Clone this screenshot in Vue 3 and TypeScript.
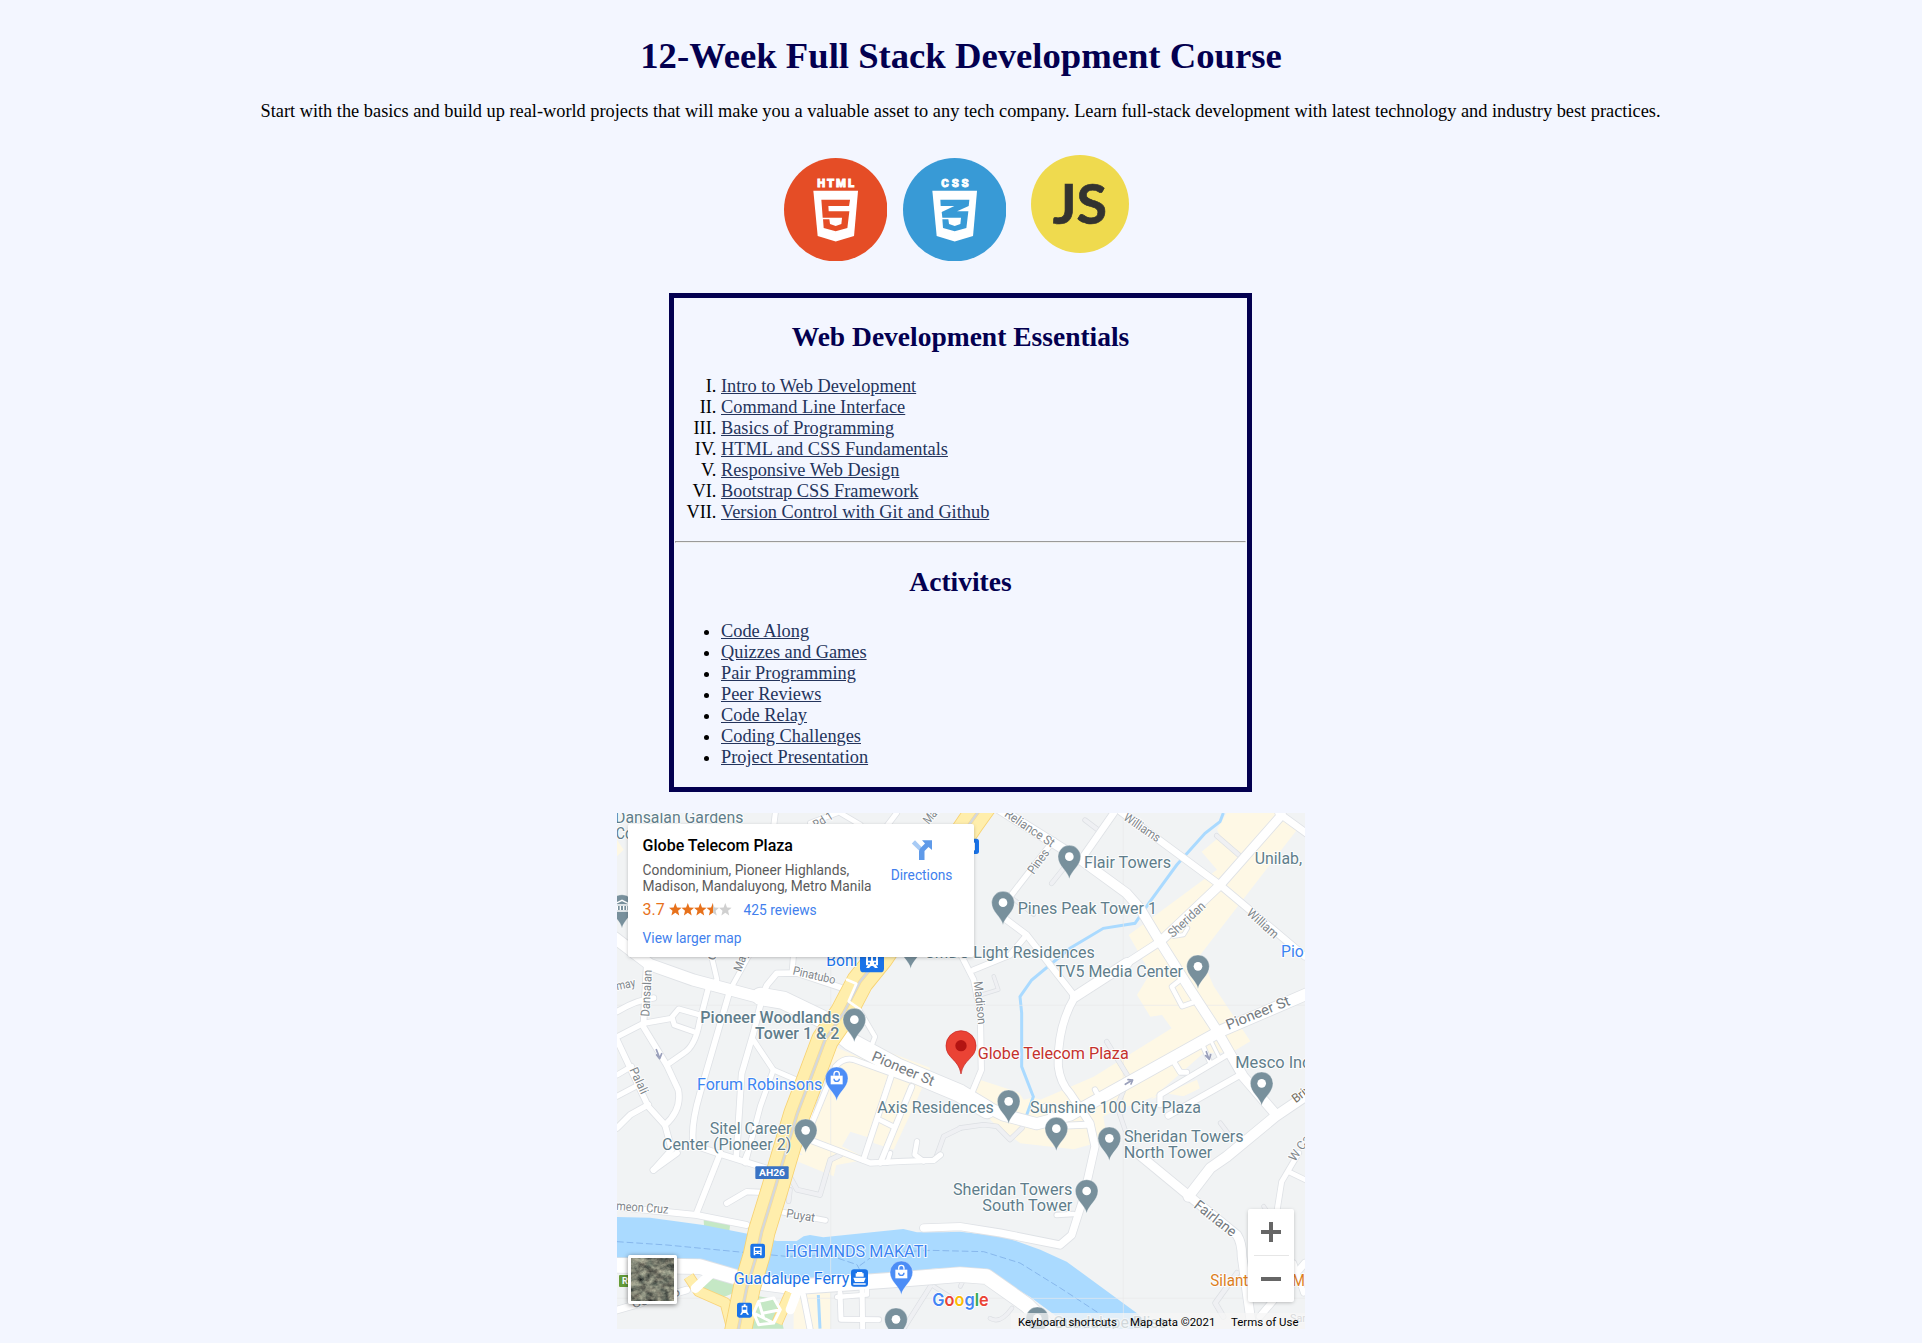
<script setup lang="ts">
interface Road { d: string; w: number }
interface Label { t: string; x: number; y: number; len: number; r?: number; c?: string; s?: number; b?: number }
interface Pin { x: number; y: number; c?: string; kind?: string }

const essentials: string[] = [
  'Intro to Web Development', 'Command Line Interface', 'Basics of Programming',
  'HTML and CSS Fundamentals', 'Responsive Web Design', 'Bootstrap CSS Framework',
  'Version Control with Git and Github',
]
const activities: string[] = [
  'Code Along', 'Quizzes and Games', 'Pair Programming', 'Peer Reviews',
  'Code Relay', 'Coding Challenges', 'Project Presentation',
]

// The map canvas uses three units per CSS pixel.
const lanes: Road[] = [
  { d: 'M1404 21L1445 52', w: 12 }, { d: 'M1345 160L1304 211', w: 12 }, { d: 'M1799 68L1870 130', w: 12 },
  { d: 'M1095 545L1144 530L1130 490', w: 9 }, { d: 'M1469 686L1539 800', w: 12 },
  { d: 'M1529 811L1500 880L1524 950', w: 11 }, { d: 'M1029 945L1100 935L1140 940L1179 980L1215 945', w: 12 },
  { d: 'M1810 930L1840 970', w: 11 }, { d: 'M1860 1380L1795 1470L1819 1511', w: 14 },
  { d: 'M1119 1516Q1150 1535 1185 1485', w: 10 }, { d: 'M1185 255L1250 305', w: 9 },
  { d: 'M515 1085L540 1130L609 1146L640 1040L670 1026', w: 13 }, { d: 'M519 1130L515 1165', w: 12 },
  { d: 'M940 1420L860 1547', w: 12 }, { d: 'M950 1420L1029 1470', w: 10 }, { d: 'M1029 946L980 970L955 1040', w: 12 },
  { d: 'M1030 1420L1050 1380', w: 10 }, { d: 'M2020 1300L1940 1180', w: 10 },
]
const roads: Road[] = [
  { d: 'M0 596Q60 560 110 555', w: 16 }, { d: 'M0 672L79 631L164 616', w: 16 },
  { d: 'M249 606L185 588L165 612L172 636L229 656', w: 15 }, { d: 'M278 510L248 625Q235 700 199 721L149 756', w: 16 },
  { d: 'M90 440L79 641L149 756L184 831Q195 890 144 936', w: 17 }, { d: 'M0 681L94 881L144 936L164 1010L110 1071', w: 17 },
  { d: 'M0 786L44 760', w: 15 }, { d: 'M0 850L64 816', w: 15 }, { d: 'M0 945L40 905L94 875', w: 17 },
  { d: 'M339 531L249 841Q220 940 229 996L300 1020L460 1070', w: 17 }, { d: 'M434 561L409 661L374 781L358 1030', w: 17 },
  { d: 'M409 681L469 771L539 801', w: 15 }, { d: 'M469 771L430 880L385 1050', w: 15 },
  { d: 'M434 551L450 516L479 481L540 480L690 530', w: 17 }, { d: 'M530 420L525 480', w: 15 },
  { d: 'M284 432L300 500L285 515', w: 14 }, { d: 'M400 420L345 520', w: 14 },
  { d: 'M475 0L470 40', w: 15 }, { d: 'M660 0L580 30', w: 14 }, { d: 'M839 0L809 40', w: 15 }, { d: 'M670 0L730 35', w: 14 },
  { d: 'M700 545L774 671L759 710', w: 13 }, { d: 'M585 931L655 761Q680 732 710 740L879 801', w: 15 },
  { d: 'M614 791L570 931', w: 15 }, { d: 'M822 791L739 1041', w: 16 }, { d: 'M884 821L790 1050', w: 16 },
  { d: 'M789 921L829 941', w: 14 }, { d: 'M579 981L760 1050L860 1045L950 1042L970 1026', w: 16 }, { d: 'M900 985L893 1025L920 1045', w: 14 },
  { d: 'M1490 0L1395 136', w: 20 }, { d: 'M1310 82L1180 250', w: 16 },
  { d: 'M1169 321L1229 366L1369 545', w: 18 }, { d: 'M1229 366L1179 426L1069 471', w: 16 },
  { d: 'M1029 420L1070 500L1090 600L1093 771L1064 841', w: 16 },
  { d: 'M1150 -10L1399 146L1529 241L1569 286L1629 386L1720 530L1799 651L1879 791L1974 901', w: 28 },
  { d: 'M1629 386L1374 551Q1320 640 1324 761Q1330 810 1359 841L1419 931L1434 1000L1399 1156L1364 1266L1329 1296L1150 1260L1029 1241L920 1245', w: 22 },
  { d: 'M1374 551L1530 450', w: 30 },
  { d: 'M1629 386L1809 216L1994 6', w: 26 }, { d: 'M1985 0L2070 62', w: 20 },
  { d: 'M1510 -5L1809 216L2064 430', w: 20 }, { d: 'M1670 370L1700 365L1712 345', w: 10 },
  { d: 'M1729 568L1695 580L1664 521L1690 501', w: 13 }, { d: 'M1664 736L1690 778L1709 778', w: 15 },
  { d: 'M1829 726L1629 845L1629 875', w: 16 }, { d: 'M1869 786L1654 908', w: 18 }, { d: 'M1754 690L1780 750', w: 13 },
  { d: 'M1780 680L1805 730', w: 9 },
  { d: 'M2064 850L1974 911L1829 1031L1780 1065L1714 1151', w: 30 },
  { d: 'M1560 1020L1719 1151L1860 1266Q1875 1290 1875 1330L1905 1547', w: 26 },
  { d: 'M2045 1020L1994 1106L1979 1200', w: 15 }, { d: 'M2014 1076L2064 1100', w: 14 }, { d: 'M2064 1350L1929 1510', w: 20 },
  { d: 'M2060 1440L2030 1350', w: 16 },
  { d: 'M1319 1206L1369 1203', w: 14 }, { d: 'M1434 830L1450 860', w: 14 }, { d: 'M1285 880L1320 930', w: 15 }, { d: 'M1410 935L1300 940', w: 18 },
  { d: 'M310 1020L239 1200', w: 17 }, { d: 'M180 1020L109 1071', w: 17 }, { d: 'M329 1171L389 1136L434 1138', w: 16 },
  { d: 'M390 1020L380 1045', w: 13 }, { d: 'M810 1050L820 1020', w: 12 },
  { d: 'M0 1182L239 1206L389 1236', w: 18 }, { d: 'M489 1196L625 1222', w: 15 },
  { d: 'M0 1491L209 1431', w: 20 }, { d: 'M559 1446L579 1547', w: 16 }, { d: 'M669 1440L672 1519L785 1520', w: 15 },
  { d: 'M735 1420L737 1547', w: 15 }, { d: 'M660 1452L750 1445L750 1430', w: 13 },
  { d: 'M0 1357L249 1361L400 1405L529 1422L829 1401L1029 1385L1109 1391L1229 1476L1300 1547', w: 44 },
  { d: 'M-10 372L99 455L229 501L419 551L499 560L619 620L699 685L839 761L1029 841L1159 906L1259 932L1359 906L1529 811L1809 655L2074 541', w: 34 },
  { d: 'M430 550L499 562L619 620L699 685L839 761L1029 841L1110 890', w: 52 },
]

const highway = 'M1110 -40L1060 30L789 432L729 506L679 601L624 681L579 801L541 901L499 1041L474 1126L434 1256L419 1326L389 1426L362 1560'

const G = '#607d8b'
const labels: Label[] = [
  { t: 'Dansalan Gardens', x: -6, y: 31, len: 385 }, { t: 'Co', x: -4, y: 79, len: 52 },
  { t: 'Rd 1', x: 598, y: 48, len: 62, r: -32, c: '#80868b', s: 36 }, { t: 'Mad', x: 935, y: 36, len: 60, r: -50, c: '#80868b', s: 38 },
  { t: 'Reliance St', x: 1160, y: 8, len: 172, r: 34, c: '#80868b', s: 38 }, { t: 'Pines', x: 1250, y: 186, len: 82, r: -54, c: '#80868b', s: 38 },
  { t: 'Williams', x: 1517, y: 19, len: 124, r: 34, c: '#80868b', s: 38 }, { t: 'Sheridan', x: 1667, y: 376, len: 138, r: -43, c: '#80868b', s: 38 },
  { t: 'William', x: 1887, y: 303, len: 113, r: 42, c: '#80868b', s: 38 },
  { t: 'Unilab,', x: 1913, y: 154, len: 142 }, { t: 'Flair Towers', x: 1401, y: 166, len: 261 },
  { t: 'Pines Peak Tower 1', x: 1202, y: 303, len: 418 }, { t: 'SMDC Light Residences', x: 924, y: 436, len: 509 },
  { t: 'TV5 Media Center', x: 1316, y: 493, len: 382 }, { t: 'Pio', x: 1992, y: 431, len: 68, c: '#3b84f2' },
  { t: 'Boni', x: 628, y: 460, len: 93, c: '#1a73e8' }, { t: 'Pinatubo', x: 526, y: 484, len: 130, r: 13, c: '#80868b', s: 36 },
  { t: 'May', x: 372, y: 478, len: 62, r: -70, c: '#80868b', s: 36 }, { t: 'may', x: 0, y: 532, len: 58, r: -12, c: '#80868b', s: 36 },
  { t: 'C', x: 292, y: 445, len: 26, r: -70, c: '#80868b', s: 34 },
  { t: 'Dansalan', x: 97, y: 611, len: 140, r: -87, c: '#80868b', s: 37 }, { t: 'Palali', x: 37, y: 770, len: 84, r: 65, c: '#80868b', s: 37 },
  { t: 'Pioneer Woodlands', x: 250, y: 631, len: 418, b: 500 }, { t: 'Tower 1 & 2', x: 414, y: 679, len: 253, b: 500 },
  { t: 'Forum Robinsons', x: 240, y: 831, len: 376, c: '#3b84f2' },
  { t: 'Sitel Career', x: 278, y: 963, len: 245 }, { t: 'Center (Pioneer 2)', x: 135, y: 1011, len: 388 },
  { t: 'Pioneer St', x: 761, y: 741, len: 200, r: 23, c: '#747a80', s: 43 }, { t: 'Pioneer St', x: 1834, y: 651, len: 203, r: -22, c: '#747a80', s: 43 },
  { t: 'Axis Residences', x: 781, y: 899, len: 349 }, { t: 'Madison', x: 1070, y: 506, len: 130, r: 84, c: '#80868b', s: 37 },
  { t: 'Globe Telecom Plaza', x: 1082, y: 737, len: 453, c: '#c5322d' },
  { t: 'Sunshine 100 City Plaza', x: 1239, y: 899, len: 513 }, { t: 'Mesco Ind', x: 1855, y: 765, len: 228 },
  { t: 'Sheridan Towers', x: 1521, y: 988, len: 359 }, { t: 'North Tower', x: 1520, y: 1035, len: 266 },
  { t: 'Briv', x: 2036, y: 871, len: 60, r: -37, c: '#736c60', s: 37 }, { t: 'W Ca', x: 2034, y: 1048, len: 85, r: -56, c: '#80868b', s: 37 },
  { t: 'meon Cruz', x: -3, y: 1191, len: 157, r: 4, c: '#80868b', s: 37 }, { t: 'Puyat', x: 506, y: 1213, len: 87, r: 9, c: '#80868b', s: 37 },
  { t: 'HGHMNDS MAKATI', x: 505, y: 1331, len: 427, c: '#3b84f2' }, { t: 'Guadalupe Ferry', x: 350, y: 1412, len: 347, c: '#1a73e8' },
  { t: 'Consejo', x: 48, y: 1486, len: 148, r: -15, c: '#80868b', s: 36 },
  { t: 'Sheridan Towers', x: 1008, y: 1146, len: 358 }, { t: 'South Tower', x: 1096, y: 1193, len: 270 },
  { t: 'Fairlane', x: 1728, y: 1182, len: 148, r: 38, c: '#747a80', s: 43 },
  { t: 'Silant', x: 1780, y: 1420, len: 114, c: '#dd7e1c' }, { t: 'M', x: 2026, y: 1420, len: 38, c: '#dd7e1c' },
  { t: 'Guadalupe Bliss', x: 1309, y: 1544, len: 340 }, { t: 'San', x: 2019, y: 1526, len: 55, c: '#80868b', s: 34 },
]
const pins: Pin[] = [
  { x: 15, y: 279, kind: 'hall' }, { x: 881, y: 400 }, { x: 1357, y: 131 }, { x: 1158, y: 269 }, { x: 1743, y: 460 }, { x: 712, y: 620 },
  { x: 659, y: 796, c: '#4c8df6', kind: 'bag' }, { x: 566, y: 952 }, { x: 1175, y: 865 }, { x: 1318, y: 947 }, { x: 1477, y: 976 },
  { x: 1934, y: 811 }, { x: 1409, y: 1134 }, { x: 853, y: 1378, c: '#4c8df6', kind: 'bag' }, { x: 837, y: 1519 }, { x: 1261, y: 1516 },
]
</script>

<template>
  <main class="page">
    <h1>12-Week Full Stack Development Course</h1>
    <p class="intro">Start with the basics and build up real-world projects that will make you a valuable asset to any tech company. Learn full-stack development with latest technology and industry best practices.</p>

    <div class="logos">
      <svg class="logo" viewBox="0 0 310 310">
        <circle cx="155" cy="155" r="155" fill="#e54d26" />
        <text class="brand" x="100" y="86" textLength="110">HTML</text>
        <path fill="#fff" d="M88 98H222L210 234L155 250L101 234Z" />
        <path fill="#e54d26" d="M112 125H198L195 144H133L134 160H196L190 210L155 220L119 210L117 184H136L138 198L155 204L172 198L174 179H116Z" />
      </svg>
      <svg class="logo css" viewBox="0 0 310 310">
        <circle cx="155" cy="155" r="155" fill="#389ad6" />
        <text class="brand" x="115" y="86" textLength="82">CSS</text>
        <path fill="#fff" d="M88 98H222L210 234L155 250L101 234Z" />
        <path fill="#389ad6" d="M112 125H199L197 144L162 160H196L190 210L155 220L120 210L118 184H136L138 198L155 204L172 198L174 179H118L116 162L154 144H113Z" />
      </svg>
      <svg class="logo js" viewBox="0 0 294 294">
        <circle cx="147" cy="147" r="147" fill="#efda4e" />
        <text x="65" y="206" class="js-text" textLength="163" lengthAdjust="spacingAndGlyphs">JS</text>
      </svg>
    </div>

    <section class="syllabus">
      <h2>Web Development Essentials</h2>
      <ol><li v-for="item in essentials" :key="item"><a href="#">{{ item }}</a></li></ol>
      <hr>
      <h2>Activites</h2>
      <ul><li v-for="item in activities" :key="item"><a href="#">{{ item }}</a></li></ul>
    </section>

    <div class="map">
      <svg class="canvas" viewBox="0 0 2064 1548">
        <rect width="2064" height="1548" fill="#f1f3f4" />
        <g fill="#fef8e5">
          <path d="M1829 0H1995L2040 50L1750 425L1790 520L1900 685L1845 718L1760 720L1600 860L1740 800L1750 830L1700 850L1640 840L1480 900L1459 910L1470 981L1370 1009L1210 991L1130 930L1060 860L1074 796L1270 860L1430 791L1664 646L1635 606L1600 611L1560 546L1600 480L1535 366L1800 170L1754 116L1810 70L1800 50Z" />
          <path d="M650 700L839 780L739 1041L640 1060L560 1030L530 1000L625 850Z" />
          <path d="M729 684L940 765L900 860L830 1010L770 990Z" />
          <path d="M530 1026H665L650 1090L540 1045Z" />
          <path d="M530 1430H640V1548H530Z" /><path d="M0 80L20 110L0 130Z" />
        </g>
        <path fill="#f1f3f4" d="M700 956L760 975L735 1030L675 1000ZM1160 770L1290 800L1310 840L1220 860ZM1860 800L1700 900H1600L1800 800Z" />
        <path fill="#c5e8c5" d="M260 1219L340 1231L337 1254L261 1241ZM249 1421L279 1396L360 1400L350 1440L300 1460ZM409 1446L479 1460L500 1547H405Z" />
        <path fill="none" stroke="#aadaff" stroke-width="9" d="M1819 0L1809 26L1764 61L1679 156L1599 266L1554 331L1459 346L1359 406L1244 501L1209 551L1214 600L1214 761L1249 851L1229 906M604 1446L609 1547" />
        <path fill="#aadaff" d="M0 1212L99 1214L259 1236L399 1264L479 1284H539L560 1270L579 1266L619 1273L859 1248L900 1258L979 1258L1029 1256L1159 1271L1270 1310L1349 1346L1559 1500L1620 1548H1370L1240 1452L1109 1376L1029 1366L959 1366L759 1391L579 1411L369 1371L229 1348L0 1341Z" />
        <path fill="none" stroke="#7fb0e8" stroke-width="2.5" stroke-dasharray="20 9" d="M0 1286L150 1296L379 1318L507 1330L640 1328L720 1355L728 1370M728 1358L780 1320L940 1312L1100 1316L1209 1350L1330 1425L1460 1510" />
        <path fill="none" stroke="#e8eaec" stroke-width="2" d="M641 430V1548M1519 0V1548M0 577H2064M0 1456H2064" />

        <g fill="none" stroke-linecap="round" stroke-linejoin="round">
          <path v-for="(r, i) in lanes" :key="'lc' + i" :d="r.d" stroke="#dcdfe3" :stroke-width="r.w + 4" />
          <path v-for="(r, i) in lanes" :key="'lf' + i" :d="r.d" stroke="#eff0f3" :stroke-width="r.w" />
          <path v-for="(r, i) in roads" :key="'rc' + i" :d="r.d" stroke="#dfe2e6" :stroke-width="r.w + 5" />
          <path v-for="(r, i) in roads" :key="'rf' + i" :d="r.d" stroke="#fff" :stroke-width="r.w" />
          <g stroke-linecap="butt">
            <path d="M215 1390L245 1435L325 1470L345 1547M480 1530L520 1440" stroke="#f8d37a" stroke-width="34" />
            <path d="M215 1390L245 1435L325 1470L345 1547M480 1530L520 1440" stroke="#ffeeac" stroke-width="29" />
            <path :d="highway" stroke="#f7d272" stroke-width="83" />
            <path :d="highway" stroke="#ffeeac" stroke-width="78" />
            <path :d="highway" stroke="#f7dd94" stroke-width="11" />
            <path :d="highway" stroke="#d5d8db" stroke-width="7" />
          </g>
          <path d="M235 1426L289 1376M520 1490L550 1410" stroke="#fff" stroke-width="28" />
          <path d="M690 500L718 512L695 565L730 590" stroke="#fff" stroke-width="8" />
          <path d="M425 1465L470 1455L490 1490L470 1530L425 1535L410 1500ZM410 1500L440 1515L470 1530M425 1465L440 1515M490 1490L440 1500" stroke="#fff" stroke-width="9" />
          <path d="M118 710L128 735M119 726L128 737L134 722M1525 814L1546 801M1533 800L1547 801L1542 813M1768 716L1776 738M1766 728L1777 739L1781 725" stroke="#9aa0bb" stroke-width="5" />
        </g>

        <g v-for="(p, i) in pins" :key="'p' + i" :transform="`translate(${p.x} ${p.y})`">
          <path d="M0 67C-5 42-34 28-34 0A34 34 0 1 1 34 0C34 28 5 42 0 67Z" :fill="p.c ?? '#78909c'" stroke="#fff" stroke-opacity=".5" stroke-width="2" />
          <template v-if="p.kind === 'bag'">
            <path d="M-18-8H18V18H-18Z" fill="#fff" />
            <path d="M-8-8V-13A8 8 0 0 1 8-13V-8" fill="none" stroke="#fff" stroke-width="4" />
            <path d="M-8 1A8 8 0 0 0 8 1" fill="none" stroke="#4c8df6" stroke-width="4" />
          </template>
          <path v-else-if="p.kind === 'hall'" d="M-20-7L0-17L20-7V-3H-20ZM-14 0V12M-5 0V12M5 0V12M14 0V12M-20 15H20" fill="none" stroke="#fff" stroke-width="4" />
          <circle v-else r="13" fill="#fff" />
        </g>

        <text
          v-for="(l, i) in labels" :key="'t' + i" class="label"
          :transform="`translate(${l.x} ${l.y}) rotate(${l.r ?? 0})`"
          :textLength="l.len" lengthAdjust="spacingAndGlyphs"
          :fill="l.c ?? G" :font-size="l.s ?? 48" :font-weight="l.b ?? 400"
        >{{ l.t }}</text>

        <g>
          <rect x="729" y="411" width="72" height="67" rx="11" fill="#1a73e8" />
          <path fill="#fff" fill-rule="evenodd" d="M747 427Q747 421 753 421H777Q783 421 783 427V457H777L783 465H774L768 459H762L756 465H747L753 457H747ZM753 430V443H762V430ZM768 430V443H777V430ZM756 448a3 3 0 1 0 .1 0M774 448a3 3 0 1 0 .1 0" />
          <rect x="1035" y="77" width="51" height="46" rx="8" fill="#1a73e8" /><path d="M1060 89h14v23h-14z" fill="#fff" /><path d="M1060 93h9v6h-9zM1060 103h9v4h-9z" fill="#1a73e8" />
          <rect x="400" y="1292" width="44" height="44" rx="7" fill="#1a73e8" />
          <path fill="#fff" fill-rule="evenodd" d="M410 1301H434V1327H429V1323H415V1327H410ZM414 1305V1313H430V1305ZM414 1317H419V1320H414ZM425 1317H430V1320H425Z" />
          <rect x="360" y="1469" width="45" height="45" rx="7" fill="#1a73e8" />
          <path fill="#fff" fill-rule="evenodd" d="M380 1474H386V1478H391V1497L396 1505H390L387 1500H378L375 1505H369L374 1497V1478H380ZM377 1483V1490H388V1483Z" />
          <rect x="702" y="1369" width="51" height="52" rx="9" fill="#1a73e8" />
          <path fill="#fff" d="M720 1377H736V1381H740V1391H716V1381H720ZM709 1394H746L741 1407H714ZM709 1411H746V1415H709Z" />
          <rect x="415" y="1060" width="100" height="38" rx="3" fill="#3a73c4" />
          <text x="426" y="1089" class="shield" font-size="29" textLength="78" lengthAdjust="spacingAndGlyphs">AH26</text>
          <rect x="6" y="1386" width="44" height="36" rx="3" fill="#659c39" /><text x="15" y="1414" class="shield" font-size="28">R</text>
        </g>

        <path d="M1032 783C1025 738 987 736 987 698A45 45 0 1 1 1077 698C1077 736 1039 738 1032 783Z" fill="#ea4335" stroke="#c5221f" stroke-width="2" />
        <circle cx="1032" cy="698" r="17" fill="#b31412" />
        <text x="946" y="1478" class="google" textLength="169" lengthAdjust="spacingAndGlyphs"><tspan fill="#4285f4">G</tspan><tspan fill="#ea4335">o</tspan><tspan fill="#fbbc04">o</tspan><tspan fill="#4285f4">g</tspan><tspan fill="#34a853">l</tspan><tspan fill="#ea4335">e</tspan></text>
      </svg>

      <aside class="place">
        <div class="details">
          <div class="name">Globe Telecom Plaza</div>
          <div class="address">Condominium, Pioneer Highlands,<br>Madison, Mandaluyong, Metro Manila</div>
          <div class="rating">
            <span class="score">3.7</span>
            <svg class="stars" viewBox="0 0 65 13">
              <defs><linearGradient id="half"><stop offset=".5" stop-color="#e7711b" /><stop offset=".5" stop-color="#d0d0d0" /></linearGradient></defs>
              <path v-for="n in 5" :key="n" :transform="`translate(${(n - 1) * 12.5} 0)`" d="M6.3 0L8 4.4L12.6 4.7L9.1 7.7L10.2 12.4L6.3 9.8L2.4 12.4L3.5 7.7L0 4.7L4.6 4.4Z" :fill="n < 4 ? '#e7711b' : n === 4 ? 'url(#half)' : '#d0d0d0'" />
            </svg>
            <a href="#" class="reviews">425 reviews</a>
          </div>
          <a href="#" class="larger">View larger map</a>
        </div>
        <a href="#" class="directions">
          <svg viewBox="0 0 22 22"><path d="M.8 4.5L4 1.2L10.5 8L8.5 12Z" fill="#a8cbf5" /><path d="M8 21V12.5Q8 10.5 9.5 9L14 4.5L11 1.2H21V11L17.5 8L13.5 12V21Z" fill="#5f9ae9" /></svg>
          Directions
        </a>
      </aside>

      <div class="satellite">
        <svg viewBox="0 0 43 43">
          <filter id="terrain" x="0" y="0" width="100%" height="100%" color-interpolation-filters="sRGB">
            <feTurbulence type="fractalNoise" baseFrequency=".13 .17" numOctaves="4" seed="8" />
            <feColorMatrix values=".7 .3 0 0 -.03  .65 .35 0 0 -.02  .55 .3 0 0 0  0 0 0 0 1" />
          </filter>
          <rect width="43" height="43" fill="#73756b" filter="url(#terrain)" />
        </svg>
      </div>

      <div class="zoom"><button class="plus" aria-label="Zoom in" /><i /><button aria-label="Zoom out" /></div>
      <div class="legal"><span class="keys">Keyboard shortcuts</span><span class="data">Map data ©2021</span><span class="terms">Terms of Use</span></div>
    </div>
  </main>
</template>

<style>
body { background: #f3f6ff; }
</style>

<style scoped>
.page { display: flex; flex-direction: column; align-items: center; min-height: 1343px; padding-top: 35px; box-sizing: border-box; font: 18.33px/21px "Liberation Serif", "Times New Roman", serif; color: #000; }
h1 { margin: 0; font-size: 36.66px; line-height: 41px; color: #030050; }
.intro { margin: 25px 1px 0 0; white-space: nowrap; }
.logos { display: flex; align-items: flex-start; width: 354px; height: 104px; margin: 33px 0 34px; }
.logo { display: block; width: 103.4px; height: 103.4px; margin-top: 2.5px; flex: none; }
.css { margin-left: 15.6px; }
.js { width: 98px; height: 98px; margin: 0 0 0 25px; }
.brand { font: 900 34px Roboto, sans-serif; fill: #fff; stroke: #fff; stroke-width: 2.5px; }
.js-text { font: 700 164px Lato, sans-serif; fill: #333330; stroke: #333330; stroke-width: 2px; }
.syllabus { width: 583px; height: 499px; box-sizing: border-box; border: 5px solid #030050; padding: 1px; margin-right: 1px; }
h2 { margin: 22px 0 23px; font-size: 27.5px; line-height: 32px; color: #030050; text-align: center; }
ol, ul { margin: 0 0 18px; padding-left: 46px; }
ol { list-style: upper-roman; }
li { line-height: 21px; }
li a { color: #24345c; text-decoration: underline; }
hr { margin: 0; border: 1px solid; border-color: #9a9a9a #eee #eee #9a9a9a; }
hr + h2 { margin-top: 23px; }
.map { position: relative; width: 688px; height: 516px; margin-top: 21px; overflow: hidden; font-family: Roboto, sans-serif; }
.canvas { display: block; width: 688px; height: 516px; }
.label { font-family: Roboto, sans-serif; paint-order: stroke; stroke: #fff; stroke-opacity: .85; stroke-width: 6px; stroke-linejoin: round; }
.shield { font-family: Roboto, sans-serif; font-weight: 700; fill: #fff; }
.google { font: 600 53px Inter, sans-serif; paint-order: stroke; stroke: #fff; stroke-width: 5px; }
.place { position: absolute; left: 11px; top: 11px; width: 346px; height: 133px; box-sizing: border-box; padding: 11px 14.6px; display: flex; background: #fff; border-radius: 2px; box-shadow: 0 1px 4px -1px rgba(0, 0, 0, .35); }
.place a { color: #427fed; text-decoration: none; }
.details { width: 247px; white-space: nowrap; }
.name { font-size: 16px; line-height: 21px; font-weight: 500; }
.address { margin-top: 6px; font-size: 13.75px; line-height: 16px; color: #5b5b5b; }
.rating { display: flex; align-items: center; height: 20px; margin-top: 5px; font-size: 13.75px; }
.score { width: 26px; font-size: 16px; color: #e7711b; }
.stars { width: 65px; height: 13px; }
.reviews { margin: 2px 0 0 10px; }
.larger { display: block; margin-top: 11px; font-size: 13.75px; line-height: 16px; }
.directions { display: flex; flex-direction: column; align-items: center; width: 64px; padding-top: 4px; font-size: 13.75px; line-height: 16px; }
.directions svg { width: 22px; height: 22px; margin-bottom: 6px; }
.satellite { position: absolute; left: 11px; top: 442px; width: 43px; height: 43px; border: 3px solid #fff; border-radius: 2px; box-shadow: 0 1px 5px rgba(0, 0, 0, .5); }
.satellite svg { display: block; }
.zoom { position: absolute; left: 631px; top: 396px; width: 46px; height: 93px; display: flex; flex-direction: column; align-items: center; background: #fff; border-radius: 2px; box-shadow: 0 1px 4px -1px rgba(0, 0, 0, .35); }
.zoom button { width: 46px; height: 46px; padding: 0; border: 0; background: linear-gradient(#666, #666) center / 20px 4px no-repeat; }
.zoom .plus { background: linear-gradient(#666, #666) center / 20px 4px no-repeat, linear-gradient(#666, #666) center / 4px 20px no-repeat; }
.zoom i { width: 35px; height: 1px; background: #e6e6e6; }
.legal { position: absolute; right: 0; bottom: 0; height: 16px; display: flex; background: rgba(245, 245, 245, .75); font-size: 11.4px; line-height: 18px; white-space: nowrap; }
.legal span { box-sizing: border-box; padding-left: 7px; }
.keys { width: 112px; }
.data { width: 101px; }
.terms { width: 81px; }
</style>
